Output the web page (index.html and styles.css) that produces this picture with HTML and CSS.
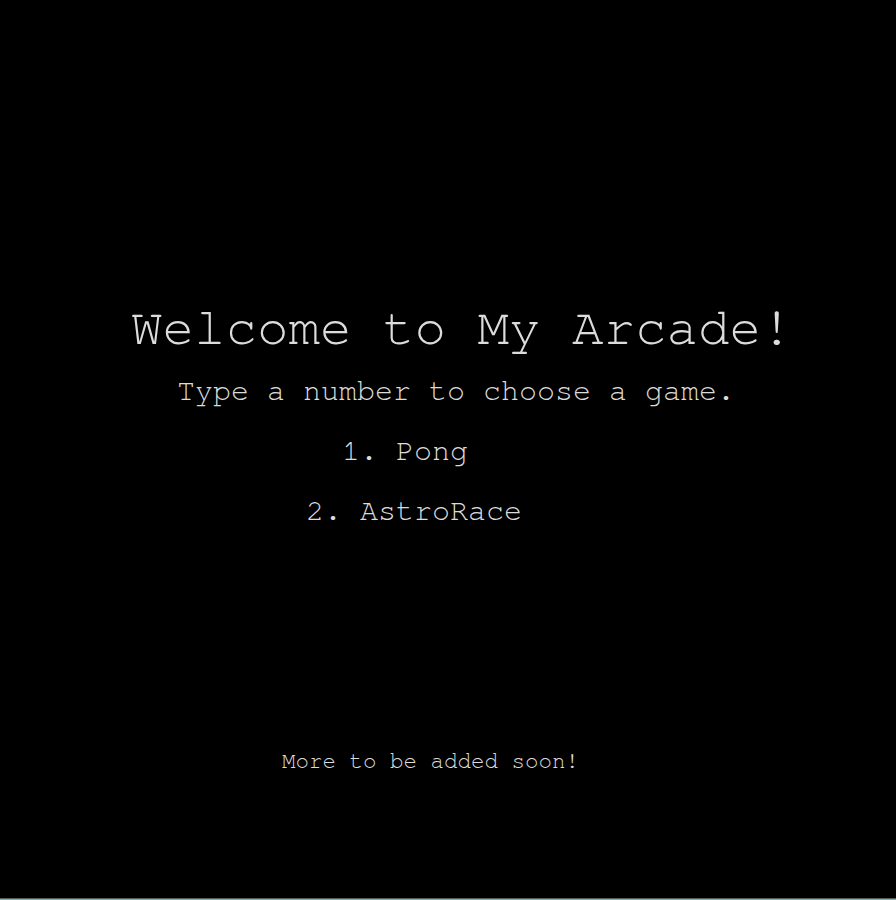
FILE: index.html
```html
<!DOCTYPE html>
<html lang="en">
<head>
<meta charset="utf-8">
<title>My Arcade</title>
<link rel="stylesheet" href="styles.css">
</head>
<body>
<main class="screen">
  <h1 class="title">Welcome to My Arcade!</h1>
  <p class="subtitle">Type a number to choose a game.</p>
  <p class="game game-one">1. Pong</p>
  <p class="game game-two">2. AstroRace</p>
  <p class="note">More to be added soon!</p>
</main>
<div class="edge-gray"></div>
<div class="edge-cyan"></div>
</body>
</html>
```

FILE: styles.css
```css
html, body {
  margin: 0;
  padding: 0;
  background: #000;
}

body {
  width: 896px;
  height: 900px;
  overflow: hidden;
  font-family: "Nimbus Mono PS", "Nimbus Mono L", FreeMono, "Courier New", "Liberation Mono", monospace;
  color: #dcdcdc;
}

.screen {
  height: 898px;
  display: flex;
  flex-direction: column;
  background: #000;
}

.screen p,
.screen h1 {
  margin: 0;
  line-height: 1;
  font-weight: normal;
  white-space: pre;
}

.title {
  font-size: 52.5px;
  margin-top: 303px !important;
  padding-left: 131px;
}

.subtitle {
  font-size: 30px;
  margin-top: 20px !important;
  padding-left: 177px;
}

.game {
  font-size: 30px;
}

.game-one {
  margin-top: 30px !important;
  padding-left: 342px;
}

.game-two {
  margin-top: 30px !important;
  padding-left: 306px;
}

.note {
  font-size: 22.5px;
  margin-top: 225px !important;
  padding-left: 282px;
}

.edge-gray {
  height: 1px;
  background: #5a5a5a;
}

.edge-cyan {
  height: 1px;
  background: #4fc3d8;
}
```
